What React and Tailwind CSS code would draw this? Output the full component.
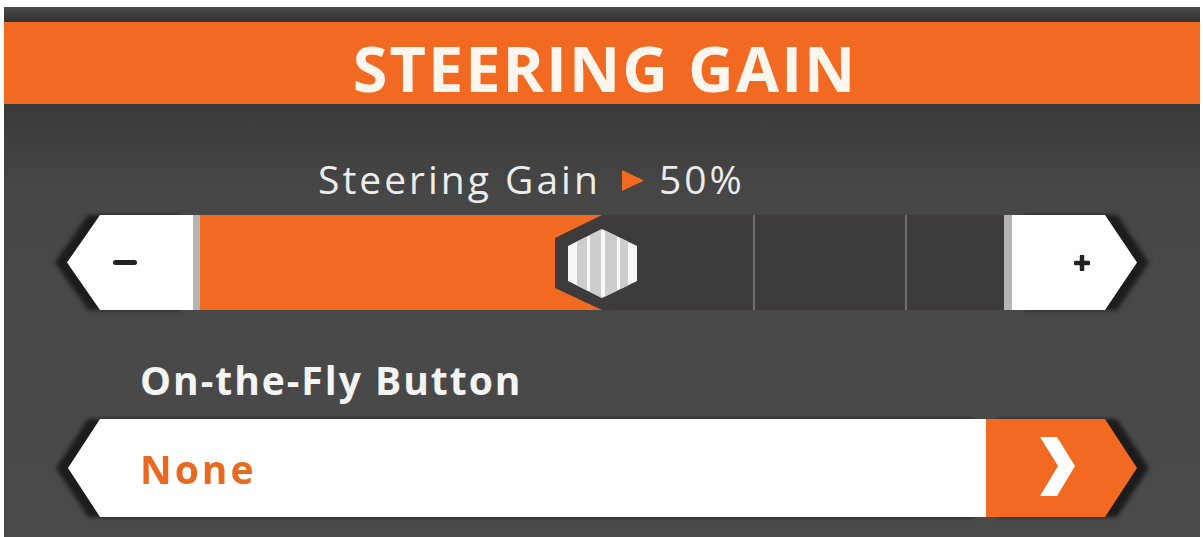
const FONT = { fontFamily: '"Open Sans", "Liberation Sans", Arial, sans-serif' };

function Thumb() {
  return (
    <svg width="94" height="95" viewBox="0 0 94 95" className="block">
      <defs>
        <clipPath id="thumb-face">
          <polygon points="47,14 82,31 82,66 47,83 13,66 13,31" />
        </clipPath>
      </defs>
      <polygon points="47,0 94,23 94,73 47,95 0,73 0,23" fill="#3d3b3b" />
      <polygon points="47,14 82,31 82,66 47,83 13,66 13,31" fill="#f7f7f7" />
      <g clipPath="url(#thumb-face)" fill="#cdcdcd">
        <rect x="22" y="0" width="10" height="95" />
        <rect x="35" y="0" width="11" height="95" />
        <rect x="50" y="0" width="12" height="95" />
        <rect x="65" y="0" width="8" height="95" />
      </g>
    </svg>
  );
}

function SteeringSlider({ value }) {
  return (
    <div className="flex h-[95px] mt-[18px] pl-[63px]">
      {/* decrement */}
      <div className="w-[126px] h-full [filter:drop-shadow(-12px_0_2px_#1c1c1c)]">
        <div className="h-full bg-white flex items-center [clip-path:polygon(33px_0,100%_0,100%_100%,33px_100%,0_50%)]">
          <div className="ml-[46px] w-[24px] h-[5px] rounded-full bg-[#222]" />
        </div>
      </div>
      <div className="w-[7px] h-full bg-[#b4b4b4]" />

      {/* track */}
      <div className="relative w-[804px] h-full bg-[#3d3b3b]">
        <div className="h-full bg-[#f26a21]" style={{ width: `${value}%` }} />
        <div className="absolute top-0 bottom-0 left-[553px] w-[2px] bg-[#6f6d6d]" />
        <div className="absolute top-0 bottom-0 left-[705px] w-[2px] bg-[#6f6d6d]" />
        <div className="absolute top-0 -ml-[47px]" style={{ left: `${value}%` }}>
          <Thumb />
        </div>
      </div>

      {/* increment */}
      <div className="w-[8px] h-full bg-[#b4b4b4]" />
      <div className="w-[125px] h-full [filter:drop-shadow(12px_0_2px_#1c1c1c)]">
        <div className="h-full bg-white flex items-center [clip-path:polygon(0_0,93px_0,100%_50%,93px_100%,0_100%)]">
          <svg width="16" height="16" viewBox="0 0 16 16" className="ml-[62px]">
            <path d="M8 1.5v13M1.5 8h13" stroke="#222" strokeWidth="4.5" strokeLinecap="round" />
          </svg>
        </div>
      </div>
    </div>
  );
}

function OptionSelect({ label }) {
  return (
    <div className="flex h-[98px] mt-[20px] pl-[64px]">
      <div className="w-[918px] h-full [filter:drop-shadow(-12px_0_2px_#1c1c1c)]">
        <div className="h-full bg-white flex items-center [clip-path:polygon(32px_0,100%_0,100%_100%,32px_100%,0_50%)]">
          <span className="ml-[72px] text-[39px] leading-[39px] font-bold tracking-[3px] text-[#e86a22]">{label}</span>
        </div>
      </div>
      <div className="w-[151px] h-full [filter:drop-shadow(12px_0_2px_#1c1c1c)]">
        <div className="h-full bg-[#f26a21] [clip-path:polygon(0_0,119px_0,100%_50%,119px_100%,0_100%)]">
          <svg width="151" height="98" viewBox="0 0 151 98" className="block">
            <polygon points="54,18 71,18 89,47 71,77 54,77 72,47" fill="#ffffff" />
          </svg>
        </div>
      </div>
    </div>
  );
}

export default function App() {
  const gain = 50;
  return (
    <div className="w-[1203px] h-[537px] bg-white overflow-hidden" style={FONT}>
      <div className="ml-[4px] mt-[7px] w-[1196px] h-[530px] flex flex-col bg-[linear-gradient(180deg,#3a3a39_97px,#474747_190px,#4a4a4a_100%)]">
        <div className="h-[15px] bg-[linear-gradient(180deg,#4a4a48,#33312f)]" />
        <div className="h-[82px] pt-[9px] bg-[#f26a21] flex items-center justify-center">
          <h1 className="pl-[6px] text-[63px] leading-[63px] font-bold text-[#fdf6ef] tracking-[2px]">STEERING GAIN</h1>
        </div>

        <div className="flex flex-col">
          <div className="pt-[56px] pl-[314px] flex items-center h-[93px] text-[39px] leading-[37px] tracking-[3px] text-[#ececec]">
            <span>Steering Gain</span>
            <svg width="23" height="21" viewBox="0 0 23 21" className="ml-[20px] mr-[15px] mt-[3px]">
              <polygon points="1,0 23,10.5 1,21" fill="#f26a21" />
            </svg>
            <span>{gain}%</span>
          </div>

          <SteeringSlider value={gain} />

          <div className="mt-[50px] pl-[136px] text-[39px] leading-[39px] font-bold tracking-[2px] text-[#f4f4f4]">
            On-the-Fly Button
          </div>

          <OptionSelect label="None" />
        </div>
      </div>
    </div>
  );
}
